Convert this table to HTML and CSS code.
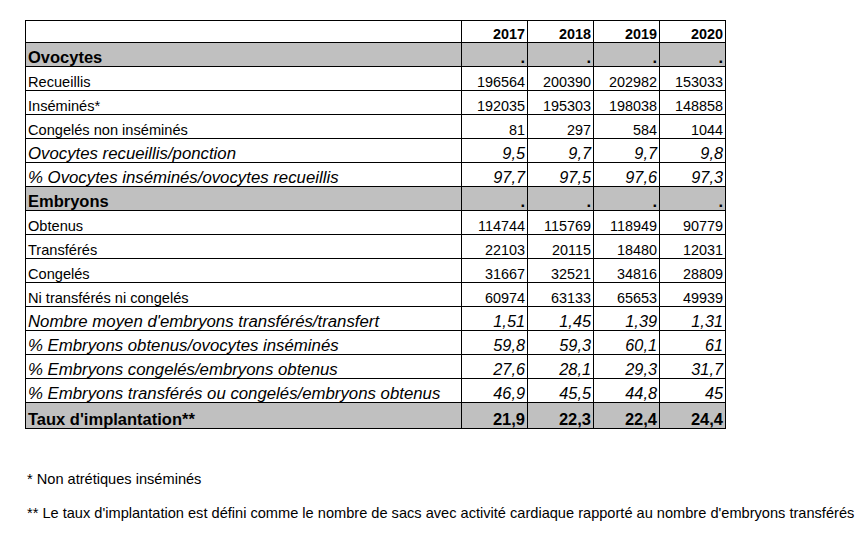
FILE: index.html
```html
<!DOCTYPE html>
<html lang="fr">
<head>
<meta charset="utf-8">
<title>Ovocytes et embryons</title>
<link rel="stylesheet" href="styles.css">
</head>
<body>
<table class="data">
  <colgroup>
    <col class="c-label"><col class="c-year"><col class="c-year"><col class="c-year"><col class="c-year">
  </colgroup>
  <tr class="head"><td></td><th>2017</th><th>2018</th><th>2019</th><th>2020</th></tr>
  <tr class="section"><td>Ovocytes</td><td class="n">.</td><td class="n">.</td><td class="n">.</td><td class="n">.</td></tr>
  <tr><td>Recueillis</td><td class="n">196564</td><td class="n">200390</td><td class="n">202982</td><td class="n">153033</td></tr>
  <tr><td>Inséminés*</td><td class="n">192035</td><td class="n">195303</td><td class="n">198038</td><td class="n">148858</td></tr>
  <tr><td>Congelés non inséminés</td><td class="n">81</td><td class="n">297</td><td class="n">584</td><td class="n">1044</td></tr>
  <tr class="ratio"><td>Ovocytes recueillis/ponction</td><td class="n">9,5</td><td class="n">9,7</td><td class="n">9,7</td><td class="n">9,8</td></tr>
  <tr class="ratio"><td>% Ovocytes inséminés/ovocytes recueillis</td><td class="n">97,7</td><td class="n">97,5</td><td class="n">97,6</td><td class="n">97,3</td></tr>
  <tr class="section"><td>Embryons</td><td class="n">.</td><td class="n">.</td><td class="n">.</td><td class="n">.</td></tr>
  <tr><td>Obtenus</td><td class="n">114744</td><td class="n">115769</td><td class="n">118949</td><td class="n">90779</td></tr>
  <tr><td>Transférés</td><td class="n">22103</td><td class="n">20115</td><td class="n">18480</td><td class="n">12031</td></tr>
  <tr><td>Congelés</td><td class="n">31667</td><td class="n">32521</td><td class="n">34816</td><td class="n">28809</td></tr>
  <tr><td>Ni transférés ni congelés</td><td class="n">60974</td><td class="n">63133</td><td class="n">65653</td><td class="n">49939</td></tr>
  <tr class="ratio"><td>Nombre moyen d'embryons transférés/transfert</td><td class="n">1,51</td><td class="n">1,45</td><td class="n">1,39</td><td class="n">1,31</td></tr>
  <tr class="ratio"><td>% Embryons obtenus/ovocytes inséminés</td><td class="n">59,8</td><td class="n">59,3</td><td class="n">60,1</td><td class="n">61</td></tr>
  <tr class="ratio"><td>% Embryons congelés/embryons obtenus</td><td class="n">27,6</td><td class="n">28,1</td><td class="n">29,3</td><td class="n">31,7</td></tr>
  <tr class="ratio"><td>% Embryons transférés ou congelés/embryons obtenus</td><td class="n">46,9</td><td class="n">45,5</td><td class="n">44,8</td><td class="n">45</td></tr>
  <tr class="section total"><td>Taux d'implantation**</td><td class="n">21,9</td><td class="n">22,3</td><td class="n">22,4</td><td class="n">24,4</td></tr>
</table>
<div class="notes">
  <p>* Non atrétiques inséminés</p>
  <p>** Le taux d'implantation est défini comme le nombre de sacs avec activité cardiaque rapporté au nombre d'embryons transférés</p>
</div>
</body>
</html>
```
FILE: styles.css
```css
html, body {
  margin: 0;
  padding: 0;
  background: #ffffff;
}
body {
  font-family: "Liberation Sans", Arial, sans-serif;
  color: #000000;
  padding: 20px 0 0 25px;
}
.data {
  border-collapse: collapse;
  table-layout: fixed;
  width: 700px;
  font-size: 14.6px;
}
.c-label { width: 436px; }
.c-year { width: 66px; }
.data td, .data th {
  border: 1px solid #000000;
  height: 23px;
  padding: 0 2px 0 2px;
  vertical-align: bottom;
  line-height: 15px;
  text-align: left;
  white-space: nowrap;
}
.data td.n {
  text-align: right;
  font-size: 14.4px;
}
.data .head td, .data .head th {
  height: 21px;
}
.data th {
  text-align: right;
  font-weight: bold;
  font-size: 14.4px;
}
.section td,
.section td.n {
  background: #c0c0c0;
  font-weight: bold;
  font-size: 16.5px;
  line-height: 17px;
}
.data .total td {
  height: 25px;
}
.ratio td,
.ratio td.n {
  font-style: italic;
  font-size: 16.8px;
  line-height: 17px;
}
.ratio td.n {
  font-size: 16.3px;
}
.notes {
  margin-top: 42px;
  font-size: 14.6px;
}
.notes p {
  margin: 0 0 17px 2px;
  line-height: 17px;
}
```
